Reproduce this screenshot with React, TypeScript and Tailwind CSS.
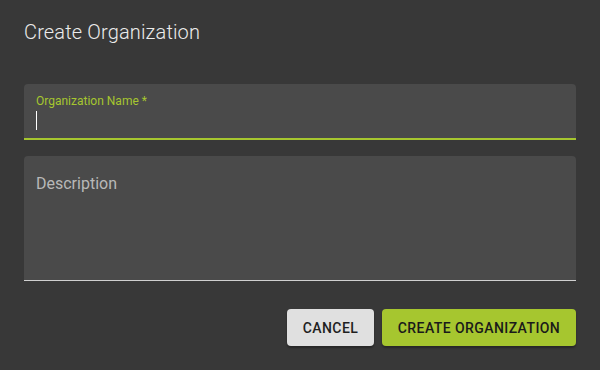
import React from 'react';

// Modal "Create Organization" in dark theme
export default function App() {
  return (
    <div
      className="flex h-[370px] w-[600px] flex-col bg-[#383838] text-[#e6e6e6]"
      style={{ fontFamily: 'Roboto, "Liberation Sans", sans-serif' }}
    >
      <div className="px-6 pt-4">
        <h2 className="text-[20px] leading-8 font-light tracking-[0.0075em] text-[#ececec]">
          Create Organization
        </h2>
      </div>

      <div className="flex flex-col gap-4 px-6 pt-9">
        <div className="h-14 rounded-t bg-[#4a4a4a] border-b-2 border-[#a6c62f] px-3 pt-[9px]">
          <div className="text-xs leading-4 text-[#a6c62f]">Organization Name *</div>
          <div className="mt-[2px] h-[19px] w-px bg-white" />
        </div>

        <div className="h-[125px] rounded-t bg-[#4a4a4a] border-b border-[#d0d0d0] px-3 pt-4">
          <div className="text-base leading-6 text-[#b8b8b8]">Description</div>
        </div>
      </div>

      <div className="flex justify-end gap-2 px-6 pt-7">
        <button
          type="button"
          className="h-[37px] w-[87px] rounded bg-[#e0e0e0] text-sm font-medium uppercase tracking-[0.03em] text-[#1f1f1f] shadow-[0_2px_2px_rgba(0,0,0,0.3)]"
        >
          Cancel
        </button>
        <button
          type="button"
          className="h-[37px] w-[194px] rounded bg-[#a6c62f] text-sm font-medium uppercase tracking-[0.03em] text-[#1a1a1a] shadow-[0_2px_2px_rgba(0,0,0,0.3)]"
        >
          Create Organization
        </button>
      </div>
    </div>
  );
}
